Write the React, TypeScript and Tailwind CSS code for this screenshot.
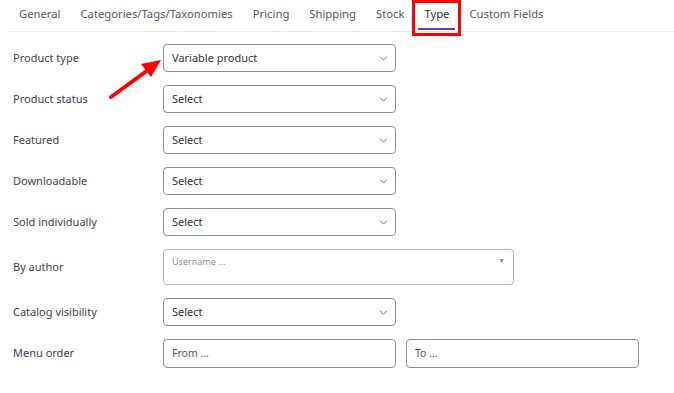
import { ChevronDown } from 'lucide-react'

const tabs = ['General', 'Categories/Tags/Taxonomies', 'Pricing', 'Shipping', 'Stock', 'Type', 'Custom Fields']

function SelectBox({ value }: { value: string }) {
  return (
    <div className="flex h-[28px] w-[233px] items-center justify-between rounded-[4px] border border-[#8c8f94] bg-white pl-[8px] pr-[5px] text-[11px] text-[#2c3338]">
      <span>{value}</span>
      <ChevronDown size={13} strokeWidth={1.5} className="text-[#50575e]" />
    </div>
  )
}

function Row({ label, children }: { label: string; children: React.ReactNode }) {
  return (
    <div className="flex items-center">
      <div className="w-[150px] text-[11px] text-[#3c434a]">{label}</div>
      {children}
    </div>
  )
}

export default function App() {
  return (
    <div className="h-[393px] w-[674px] bg-white font-['Noto_Sans',sans-serif]">
      <div className="ml-[9px] flex h-[32px] items-stretch border-b border-[#e6e7e8]">
        {tabs.map((t) => (
          <div
            key={t}
            className={
              'relative flex items-center px-[10px] pb-[2px] text-[11.25px] ' +
              (t === 'Type' ? 'text-[#2c3338]' : 'text-[#50575e]')
            }
          >
            {t}
            {t === 'Type' && (
              <>
                <span className="absolute bottom-[1px] left-[4px] right-[4px] h-[2px] bg-[#5b3fd1]" />
                <span className="absolute -bottom-[5px] -left-[2px] -right-[2px] top-0 border-[3px] border-[#ff0000]" />
              </>
            )}
          </div>
        ))}
      </div>

      <div className="relative mt-[12px] flex flex-col gap-[13px] pl-[13px]">
        <Row label="Product type">
          <SelectBox value="Variable product" />
        </Row>
        <Row label="Product status">
          <SelectBox value="Select" />
        </Row>
        <Row label="Featured">
          <SelectBox value="Select" />
        </Row>
        <Row label="Downloadable">
          <SelectBox value="Select" />
        </Row>
        <Row label="Sold individually">
          <SelectBox value="Select" />
        </Row>
        <Row label="By author">
          <div className="flex h-[36px] w-[351px] items-start justify-between rounded-[4px] border border-[#b5b7ba] bg-white pl-[8px] pr-[8px] pt-[5px] text-[9px] text-[#8c8f94]">
            <span>Username ...</span>
            <span className="mt-[1px] text-[7px] text-[#8c8f94]">▼</span>
          </div>
        </Row>
        <Row label="Catalog visibility">
          <SelectBox value="Select" />
        </Row>
        <Row label="Menu order">
          <div className="flex gap-[10px]">
            <div className="flex h-[29px] w-[233px] items-center rounded-[4px] border border-[#8c8f94] pl-[8px] text-[10.5px] text-[#50575e]">
              From ...
            </div>
            <div className="flex h-[29px] w-[233px] items-center rounded-[4px] border border-[#8c8f94] pl-[8px] text-[10.5px] text-[#50575e]">
              To ...
            </div>
          </div>
        </Row>

        <svg className="absolute left-0 top-[-44px]" width="674" height="140" viewBox="0 0 674 140">
          <line x1="111" y1="97" x2="148" y2="70" stroke="#ff0000" strokeWidth="4" strokeLinecap="round" />
          <polygon points="161,60 141,64 151,77" fill="#ff0000" />
        </svg>
      </div>
    </div>
  )
}
